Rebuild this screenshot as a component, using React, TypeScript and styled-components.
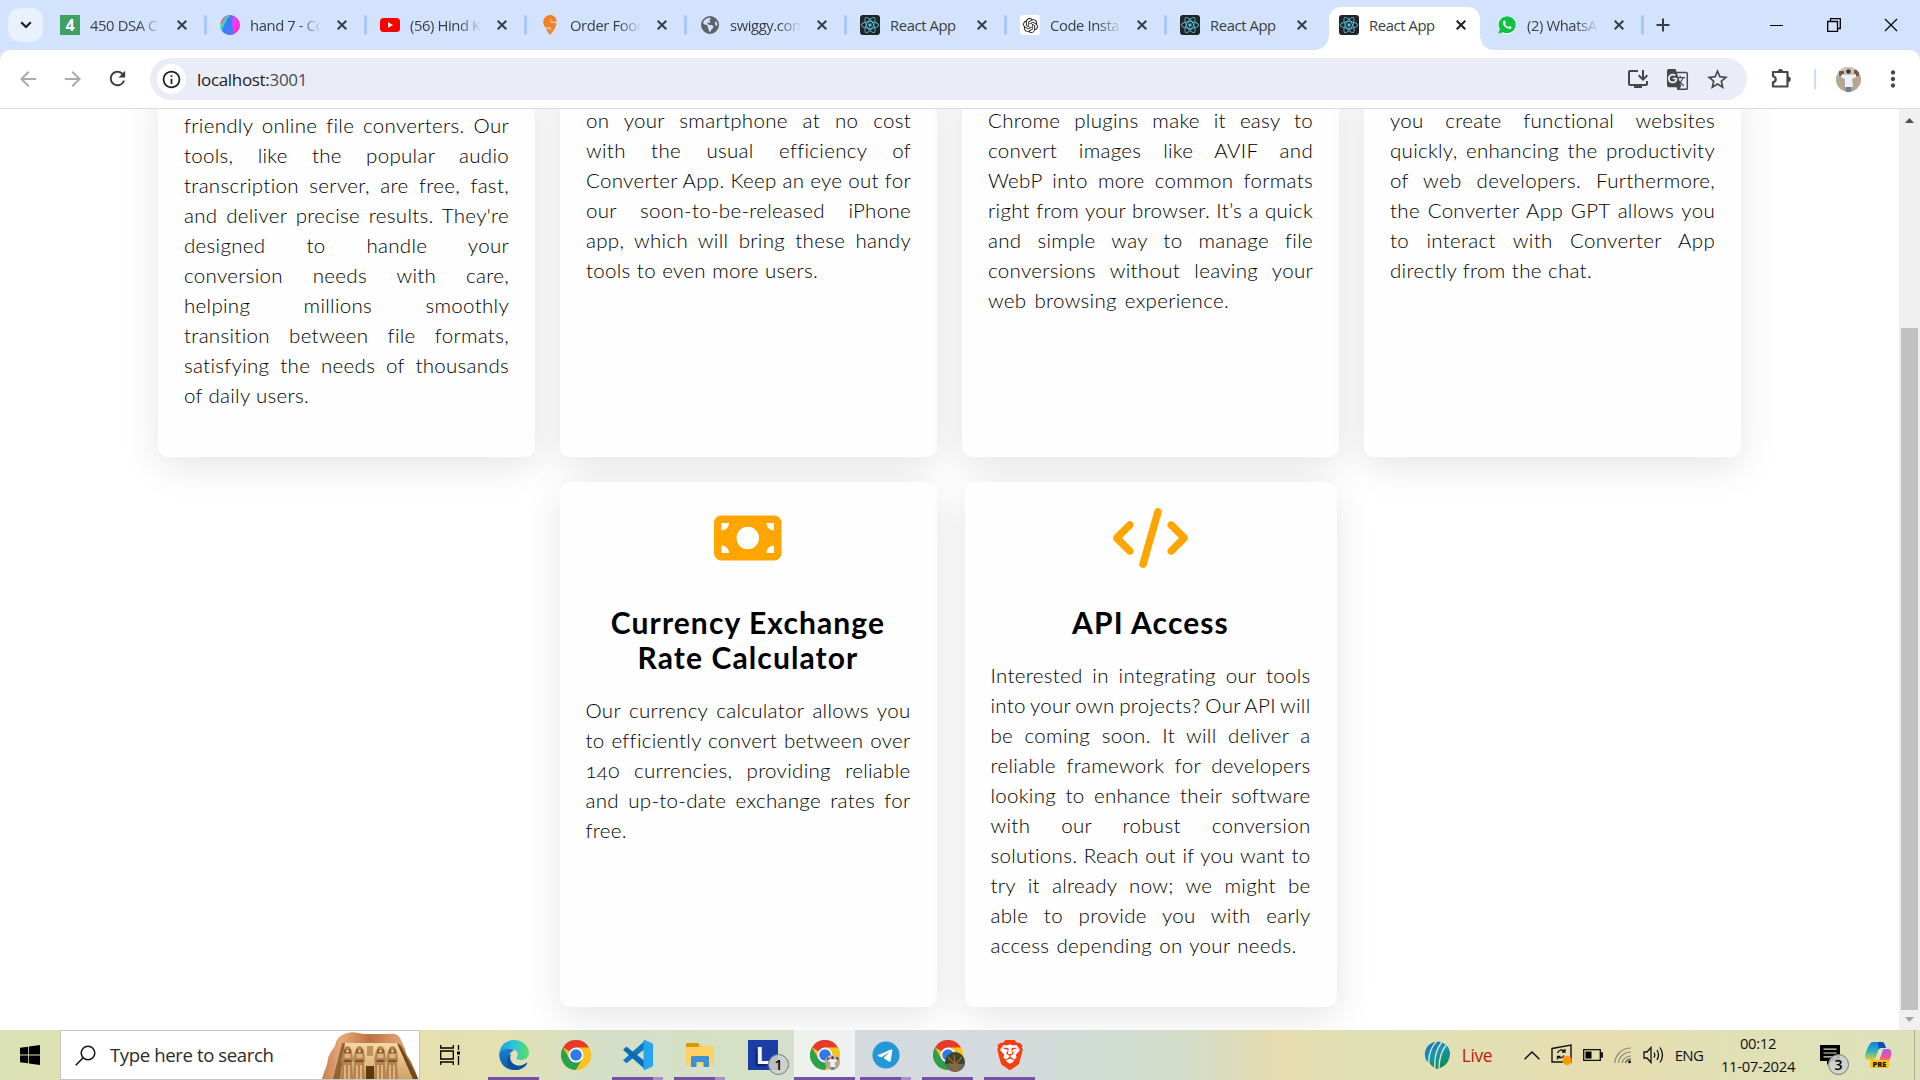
import React from "react";
import styled, { createGlobalStyle, css } from "styled-components";
import { FaCode, FaMoneyBill, FaEarthAmericas, FaTelegram } from "react-icons/fa6";
import { SiOpenai, SiReact, SiSwiggy, SiBrave } from "react-icons/si";
import { IoLogoWhatsapp } from "react-icons/io";
import {
  MdArrowBack,
  MdArrowForward,
  MdRefresh,
  MdInfoOutline,
  MdInstallDesktop,
  MdGTranslate,
  MdStarOutline,
  MdMoreVert,
} from "react-icons/md";

const GlobalStyle = createGlobalStyle`
  * { box-sizing: border-box; }
  body { margin: 0; overflow: hidden; background: #fff; }
  svg { display: block; flex: none; }
`;

const Screen = styled.div`
  width: 1920px;
  height: 1080px;
  display: flex;
  flex-direction: column;
  overflow: hidden;
  font-family: "Open Sans", "Noto Sans", sans-serif;
  color: #1f1f1f;
`;

/* ---------- Tab strip ---------- */

const TabStrip = styled.div`
  height: 50px;
  flex: none;
  display: flex;
  background: #d3e3fd;
  padding-left: 8px;
`;

const TabSearch = styled.div`
  width: 35px;
  height: 34px;
  margin: 8px 7px 0 0;
  border-radius: 12px;
  background: #e9f0fe;
  display: flex;
  align-items: center;
  justify-content: center;
`;

const TabBox = styled.div<{ $active?: boolean; $shift?: number }>`
  position: relative;
  width: ${(p) => (p.$active ? 151 : 160)}px;
  height: ${(p) => (p.$active ? 43 : 50)}px;
  margin: ${(p) => (p.$active ? "7px 10px 0 -1px" : "0")};
  margin-left: ${(p) => p.$shift}px;
  padding-left: 10px;
  padding-bottom: ${(p) => (p.$active ? 7 : 0)}px;
  display: flex;
  align-items: center;
  flex: none;
  ${(p) =>
    p.$active &&
    css`
      background: #fff;
      border-radius: 12px 12px 0 0;
      &::before,
      &::after {
        content: "";
        position: absolute;
        bottom: 0;
        width: 14px;
        height: 14px;
      }
      &::before {
        left: -14px;
        background: radial-gradient(circle at 0 0, transparent 13.5px, #fff 14px);
      }
      &::after {
        right: -14px;
        background: radial-gradient(circle at 100% 0, transparent 13.5px, #fff 14px);
      }
    `}
`;

const Favicon = styled.div<{ $bg?: string; $color?: string; $radius?: number }>`
  width: 20px;
  height: 20px;
  flex: none;
  border-radius: ${(p) => p.$radius ?? 0}px;
  background: ${(p) => p.$bg ?? "transparent"};
  color: ${(p) => p.$color ?? "#000"};
  display: flex;
  align-items: center;
  justify-content: center;
  font: 700 16px "Open Sans", sans-serif;
`;

const TabTitle = styled.div<{ $fade?: boolean }>`
  width: 73px;
  margin-left: 10px;
  font-size: 14.8px;
  letter-spacing: -0.4px;
  line-height: 22px;
  white-space: nowrap;
  overflow: hidden;
  color: #3a3d41;
  ${(p) =>
    p.$fade &&
    css`
      mask-image: linear-gradient(90deg, #000 66%, transparent 98%);
    `}
`;

const TabClose = styled.div`
  width: 16px;
  margin-left: 11px;
  display: flex;
  justify-content: center;
`;

const TabDivider = styled.div`
  width: 3px;
  height: 20px;
  margin-left: 14px;
  border-radius: 2px;
  background: #a8c7fa;
`;

const NewTab = styled.div`
  width: 24px;
  margin-left: 4px;
  display: flex;
  align-items: center;
  justify-content: center;
`;

const WindowButtons = styled.div`
  margin-left: auto;
  padding-right: 22px;
  display: flex;
  gap: 43.5px;
  align-items: center;
`;

/* ---------- Toolbar ---------- */

const ToolbarBack = styled.div`
  height: 59px;
  flex: none;
  background: #d3e3fd;
`;

const Toolbar = styled.div`
  height: 59px;
  border-bottom: 1px solid #dcdcde;
  border-radius: 10px 10px 0 0;
  background: #fff;
  display: flex;
  align-items: center;
  padding: 0 0 0 16px;
  color: #474747;
`;

const NavButtons = styled.div`
  display: flex;
  flex: none;
  gap: 21px;
  width: 134px;
  color: #ababab;
  svg:last-child {
    color: #3c3c3c;
  }
`;

const Omnibox = styled.div`
  width: 1597px;
  flex: none;
  height: 42px;
  border-radius: 21px;
  background: #eaedf8;
  display: flex;
  align-items: center;
  padding-left: 7px;
`;

const SiteInfo = styled.div`
  width: 29px;
  height: 30px;
  border-radius: 50%;
  background: #fff;
  color: #1f1f1f;
  display: flex;
  align-items: center;
  justify-content: center;
`;

const Address = styled.div`
  margin-left: 11px;
  font-size: 17px;
  letter-spacing: -0.32px;
  color: #1f2023;
  span {
    color: #474b52;
  }
`;

const OmniActions = styled.div`
  margin-left: auto;
  padding-right: 17px;
  display: flex;
  gap: 16px;
  align-items: center;
  color: #474747;
`;

const Gap = styled.div<{ $w: number }>`
  width: ${(p) => p.$w}px;
  flex: none;
`;

const ToolbarDivider = styled.div`
  width: 2px;
  height: 20px;
  flex: none;
  margin: 0 20px 0 21px;
  background: #c9dcfc;
`;

const Avatar = styled.div`
  width: 25px;
  height: 25px;
  flex: none;
  border-radius: 50%;
  overflow: hidden;
  margin-right: 19px;
`;

/* ---------- Page ---------- */

const Viewport = styled.div`
  height: 921px;
  flex: none;
  display: flex;
  overflow: hidden;
`;

const Page = styled.main`
  width: 1899px;
  height: 921px;
  overflow: hidden;
  display: flex;
  flex-direction: column;
  align-items: center;
  gap: 25px;
  background: #fff;
`;

const CardRow = styled.section`
  display: flex;
  flex: none;
  gap: 25px;
  &:first-child {
    margin-top: -32px;
  }
  &:last-child {
    gap: 28px;
    margin-right: 3px;
  }
`;

const CardBox = styled.article<{ $w?: number; $h: number; $pad: number }>`
  width: ${(p) => p.$w ?? 377}px;
  height: ${(p) => p.$h}px;
  padding: ${(p) => p.$pad}px 26px 0;
  border-radius: 10px;
  background: #fefefe;
  box-shadow: 0 10px 38px rgba(0, 0, 0, 0.105);
`;

const CardIcon = styled.div<{ $w: number }>`
  height: 60px;
  color: #ffa500;
  display: flex;
  justify-content: center;
  margin-bottom: 37px;
  svg {
    width: ${(p) => p.$w}px;
    height: 60px;
  }
`;

const CardTitle = styled.h2`
  margin: 0 -10px 20px;
  font: 700 30px/35px Lato, sans-serif;
  letter-spacing: 1.1px;
  text-align: center;
  color: #000;
`;

const CardText = styled.div`
  font: 300 20.5px/30px Lato, sans-serif;
  font-variant-numeric: oldstyle-nums;
  letter-spacing: 0.3px;
  word-spacing: -2px;
  color: #000;
`;

const TextLine = styled.div<{ $width?: number }>`
  height: 30px;
  width: ${(p) => (p.$width ? `${p.$width}px` : "auto")};
  white-space: nowrap;
  text-align: justify;
  text-align-last: justify;
`;

const Scrollbar = styled.div`
  width: 21px;
  height: 921px;
  background: #f0f0f0;
  display: flex;
  flex-direction: column;
  align-items: center;
  padding: 9px 0 7px;
`;

const Thumb = styled.div`
  width: 17px;
  height: 682px;
  margin: 205px 0 7px;
  background: #c1c1c1;
`;

/* ---------- Taskbar ---------- */

const Taskbar = styled.footer`
  height: 50px;
  flex: none;
  display: flex;
  background: linear-gradient(
    90deg,
    #dae1b6 0,
    #dde2b4 60px,
    #e6dfae 430px,
    #e3e0b2 500px,
    #d4dfc8 600px,
    #d5e1c5 760px,
    #d5dade 860px,
    #d4dadd 1000px,
    #cfddd3 1110px,
    #d5ddc8 1190px,
    #e6dcaf 1280px,
    #dfe0b4 1370px,
    #e3dfb3 1500px,
    #e6ddb0 1600px,
    #dfe1b8 1800px,
    #dde0b9 1920px
  );
`;

const Start = styled.div`
  width: 60px;
  display: flex;
  align-items: center;
  justify-content: center;
`;

const SearchBox = styled.div`
  width: 360px;
  height: 50px;
  border: 1px solid #c6c6c6;
  background: #fff;
  display: flex;
  align-items: center;
  padding-left: 14px;
`;

const SearchText = styled.div`
  width: 212px;
  margin: -2px 0 0 14px;
  font-size: 18.6px;
  letter-spacing: -0.4px;
  white-space: nowrap;
  color: #2b2b2b;
`;

const TaskView = styled.div`
  width: 63px;
  padding-right: 2px;
  display: flex;
  align-items: center;
  justify-content: center;
`;

const TaskButton = styled.div<{ $open?: boolean; $focused?: boolean; $stack?: boolean; $w?: number }>`
  position: relative;
  width: ${(p) => p.$w ?? 62}px;
  height: 50px;
  display: flex;
  align-items: center;
  justify-content: center;
  background: ${(p) => (p.$focused ? "rgba(255,255,255,.6)" : "transparent")};
  &::after {
    content: "";
    display: ${(p) => (p.$open ? "block" : "none")};
    position: absolute;
    bottom: 0;
    left: ${(p) => (p.$focused ? 0 : 5)}px;
    right: ${(p) => (p.$focused ? 0 : 6)}px;
    height: 3px;
    background: ${(p) =>
      p.$stack ? "linear-gradient(90deg, #7450a8 80%, #a98fcc 80%)" : "#7450a8"};
  }
`;

const CountBadge = styled.div<{ $x: number; $y: number }>`
  position: absolute;
  left: ${(p) => p.$x}px;
  top: ${(p) => p.$y}px;
  width: 21px;
  height: 21px;
  border-radius: 50%;
  border: 1px solid #777;
  background: rgba(205, 208, 205, 0.88);
  display: flex;
  align-items: center;
  justify-content: center;
  font-size: 14px;
  line-height: 1;
  font-weight: 600;
  color: #000;
`;

const LetterTile = styled.div`
  width: 30px;
  height: 30px;
  background: #1c3da8;
  color: #fff;
  display: flex;
  align-items: center;
  justify-content: center;
  font: 700 24px/1 "Open Sans", sans-serif;
  text-shadow: -2px 2px 2px #0b2263;
`;

const Tray = styled.div`
  margin-left: auto;
  display: flex;
  align-items: center;
`;

const TrayItem = styled.div<{ $w: number }>`
  position: relative;
  width: ${(p) => p.$w}px;
  height: 50px;
  display: flex;
  align-items: center;
  justify-content: center;
`;

const TrayText = styled.div<{ $w: number; $size: number; $color?: string; $spacing?: number }>`
  width: ${(p) => p.$w}px;
  font-size: ${(p) => p.$size}px;
  letter-spacing: ${(p) => p.$spacing ?? -0.4}px;
  color: ${(p) => p.$color ?? "#111"};
  white-space: nowrap;
  text-align: center;
`;

const Clock = styled.div`
  width: 98px;
  text-align: center;
  font-size: 14.8px;
  line-height: 23px;
  letter-spacing: -0.3px;
  white-space: nowrap;
  color: #111;
`;

const ShowDesktop = styled.div`
  width: 6px;
  height: 50px;
  border-left: 1px solid #a8ab8e;
`;

/* ---------- Drawings ---------- */

const Cross = ({ size = 10, w = 2, color = "#3a3d41" }) => (
  <svg width={size} height={size} viewBox="0 0 10 10">
    <path d="M.7.7 9.3 9.3M9.3.7.7 9.3" stroke={color} strokeWidth={w} fill="none" />
  </svg>
);

const ReactIcon = () => (
  <Favicon $bg="#222427" $color="#58c4dc" $radius={3}>
    <SiReact size={18} />
  </Favicon>
);

const Youtube = () => (
  <svg width="20" height="20" viewBox="0 0 20 20">
    <rect y="3" width="20" height="14" rx="3.5" fill="#f00" />
    <path d="M8 7.2v5.6l5-2.8z" fill="#fff" />
  </svg>
);

const Gradient = () => (
  <svg width="20" height="20" viewBox="0 0 20 20">
    <defs>
      <linearGradient id="cv" x1="0" x2="1" y2=".35">
        <stop offset="0" stopColor="#ff8a3c" />
        <stop offset=".12" stopColor="#f4e04a" />
        <stop offset=".24" stopColor="#29d6c0" />
        <stop offset=".4" stopColor="#3c7bff" />
        <stop offset=".58" stopColor="#7a63ff" />
        <stop offset=".74" stopColor="#ff3bf0" />
        <stop offset="1" stopColor="#ff2bd8" />
      </linearGradient>
      <clipPath id="cvc">
        <circle cx="10" cy="10" r="10" />
      </clipPath>
    </defs>
    <g clipPath="url(#cvc)">
      <rect width="20" height="20" fill="url(#cv)" />
      <path d="M0 18C6 15 5 5 9.500 3.500 14 3 11 14 15 20H0z" fill="#3f7dfb" />
      <path d="M0 14C4 11 4 3 9 1" fill="none" stroke="#35e0b8" strokeWidth="2" />
      <path d="M0 9C2 6 4 3 6 0" fill="none" stroke="#ff4fb0" strokeWidth="2" />
    </g>
  </svg>
);

const Puzzle = () => (
  <svg width="24" height="24" viewBox="0 0 24 24">
    <path
      d="M4 5h14.500v14.500H4v-4.300c3.600-.8 3.600-5.200 0-6z"
      fill="none"
      stroke="#474747"
      strokeWidth="2.200"
      strokeLinejoin="round"
    />
    <path d="M8.700 5a2.700 2.900 0 0 1 5.400 0zM19 9.500a2.800 2.800 0 0 1 0 5.600z" fill="#474747" />
  </svg>
);

const AvatarArt = ({ size = 25 }: { size?: number }) => (
  <svg width={size} height={size} viewBox="0 0 25 25">
    <rect width="25" height="25" fill="#b5a893" />
    <path d="M0 0h25v9H0z" fill="#c9c3bb" />
    <path d="M3 4h5v5H3zM18 3h5v6h-5z" fill="#7c5549" />
    <circle cx="12.500" cy="4.500" r="2.300" fill="#4b352b" />
    <path d="M6 7l4 1h5l5-1v3l-4 2 1 8H9V12L5 10z" fill="#eef1f5" />
    <path d="M9.500 20h6l-.5 5h-5z" fill="#6b7f96" />
  </svg>
);

const Chrome = ({ size = 30 }: { size?: number }) => (
  <svg width={size} height={size} viewBox="0 0 48 48">
    <circle cx="24" cy="24" r="24" fill="#fcc31e" />
    <path d="M24 24 3.200 12a24 24 0 0 1 41.600 0z" fill="#e33b2e" />
    <path d="M3.200 12A24 24 0 0 0 24 48l10.400-18L24 24 13.600 30z" fill="#2da04e" />
    <path d="M24 12h20.800A24 24 0 0 1 24 48l10.400-18z" fill="#fcc31e" />
    <circle cx="24" cy="24" r="12" fill="#fff" />
    <circle cx="24" cy="24" r="9.300" fill="#3278ea" />
  </svg>
);

const ProfileDot = styled.div<{ $x: number; $y: number; $size: number }>`
  position: absolute;
  left: ${(p) => p.$x}px;
  top: ${(p) => p.$y}px;
  width: ${(p) => p.$size}px;
  height: ${(p) => p.$size}px;
  border-radius: 50%;
  overflow: hidden;
`;

const TreeArt = () => (
  <svg width="20" height="20" viewBox="0 0 20 20">
    <rect width="20" height="20" fill="#39452f" />
    <path d="M0 12h20v8H0z" fill="#6e6a58" />
    <path d="M9 20V11L3 5M10 12l-1-9M11 12l6-7M9 14l-5-3M12 20v-9" stroke="#a4682c" strokeWidth="1.300" fill="none" />
  </svg>
);

const Edge = () => (
  <svg width="30" height="30" viewBox="0 0 30 30">
    <defs>
      <linearGradient id="e1" x1="0" y1=".4" x2="1" y2=".4">
        <stop offset="0" stopColor="#1f9fe3" />
        <stop offset=".5" stopColor="#2cc3d6" />
        <stop offset="1" stopColor="#5fe05a" />
      </linearGradient>
      <linearGradient id="e2" x1="0" y1="0" x2=".3" y2="1">
        <stop offset="0" stopColor="#1684d6" />
        <stop offset="1" stopColor="#0c59a4" />
      </linearGradient>
    </defs>
    <path d="M.3 13C1.500 5 7.500 0 15 0c8.500 0 15 6 15 12.500 0 5-3.800 7.500-7.800 7.500-3.500 0-5-1.300-4.700-2.200.3-.8 1.300-1.500 1.300-3.500 0-3-3.300-5.800-8-5.800C6 8.500 2 10.500.3 13z" fill="url(#e1)" />
    <path d="M.3 13c2-3.300 6-4.700 9.700-4.500 2.500.1 4.500 1 5.500 2-3.500.4-5.500 4-5.500 7.500 0 5.500 4.500 9 9.500 9 2.500 0 4.500-.5 6-1.200C22.800 28.500 19.300 30 15 30 6.500 30-.5 23 .3 13z" fill="url(#e2)" />
    <path d="M12.500 14c-1.200 1.500-1.500 3-1.200 4.800.8 4.400 5 7.200 9.700 6.800 2.500-.2 5-1.600 6.200-2.600.7-.6 1.300.2.800.9C25.500 27.500 21.500 30 17 29.900 10.500 29 8 23.500 8.500 19.500 9 16.500 10.500 14.500 12.500 14z" fill="#0d4f97" />
  </svg>
);

const VsCode = () => (
  <svg width="30" height="30" viewBox="0 0 30 30">
    <path d="M21.500 1 0 20.300l2.500 2.300c.5.500 1.200.5 1.700.1L22 8.800z" fill="#0a7bc4" />
    <path d="M21.500 29 0 9.700l2.500-2.300c.5-.5 1.200-.5 1.700-.1L22 21.200z" fill="#0a6cb4" />
    <path d="M21.800 0 28.700 3c.8.400 1.300 1 1.300 1.900v20.200c0 .9-.5 1.500-1.300 1.900l-6.900 3c-1 .4-1.300-.3-1.300-1V1c0-.7.300-1.400 1.300-1z" fill="#27a5ee" />
  </svg>
);

const Folder = () => (
  <svg width="28" height="24" viewBox="0 0 28 24">
    <path d="M0 1.500C0 .7.500 0 1.300 0H12l2 2.300L12 5H0z" fill="#dc9708" />
    <path d="M0 4h12l2-1.500h13c.7 0 1 .5 1 1V21c0 .7-.3 1-1 1H1c-.7 0-1-.3-1-1z" fill="#fdd164" />
    <path d="M5 24V14.500c0-1 .7-1.500 1.500-1.500h15c.8 0 1.500.5 1.500 1.500V24h-5.500v-5h-7v5z" fill="#3c91d4" />
  </svg>
);

const BraveBack = styled.div`
  width: 30px;
  height: 30px;
  color: #fb3d10;
  background: radial-gradient(circle at 50% 46%, #fff 9px, transparent 9.500px);
`;

const TelegramBack = styled.div`
  width: 28px;
  height: 28px;
  border-radius: 50%;
  color: #2299d6;
  background: radial-gradient(circle, #fff 11px, transparent 12px);
`;

const WhatsappBack = styled.div`
  width: 20px;
  height: 20px;
  color: #0dc143;
  background: radial-gradient(circle, #fff 9px, transparent 9.500px);
`;

const Statue = ({ x }: { x: number }) => (
  <g transform={`translate(${x} 0)`}>
    <path d="M3 19l2-4 2.500-1 2.500 1 2 4 1 9-1 3 1 16H1l1-15-1-4z" fill="#b5834f" />
    <path d="M5 17h5l1 4H4zM4 28h7l1 2H3z" fill="#7d5029" />
    <path d="M4 33h2v14H4zM8 33h2v14H8zM4.500 22h6v4h-6z" fill="#dcb27e" />
    <circle cx="7.500" cy="19" r="1.700" fill="#e2b781" />
  </g>
);

const Temple = () => (
  <svg width="97" height="47" viewBox="0 0 97 47">
    <defs>
      <linearGradient id="t1" x2="1">
        <stop offset="0" stopColor="#c77f50" />
        <stop offset=".2" stopColor="#e6aa78" />
        <stop offset=".5" stopColor="#bb7340" />
        <stop offset=".8" stopColor="#e0a070" />
        <stop offset="1" stopColor="#8e572c" />
      </linearGradient>
      <linearGradient id="t2" y2="1" x2="0">
        <stop offset="0" stopColor="#f6d7a3" />
        <stop offset="1" stopColor="#cfa26a" />
      </linearGradient>
    </defs>
    <path d="M0 47c2-8 5-12 6-20 1-7 7-10 8-17 2-5 6-8 12-9 5-2 10 0 16 1h26c4-1 8 0 10 4l5 11c1 7 5 9 7 15 2 5 4 8 6 15z" fill="url(#t1)" />
    <path d="M11 47 20 11h55l16 36z" fill="url(#t2)" />
    <path d="m75 11 16 36h5L79 14z" fill="#714619" />
    <path d="m11 47 9-36h3l-5 36z" fill="#8f6537" />
    <path d="M45 14h6v10h-6z" fill="#bd945c" />
    <path d="M44 34h8v13h-8z" fill="#5d3a0d" />
    <Statue x={18} />
    <Statue x={30} />
    <Statue x={51} />
    <Statue x={63} />
  </svg>
);

const Cricket = () => (
  <svg width="26" height="29" viewBox="0 0 26 29">
    <defs>
      <linearGradient id="ic" x2="0.600" y2="1">
        <stop offset="0" stopColor="#0c6ab4" />
        <stop offset=".5" stopColor="#1696bd" />
        <stop offset="1" stopColor="#0e8a5a" />
      </linearGradient>
    </defs>
    <path d="M10 1C16-1 25 3 26 12c0 7-4 13-10 15l-4 1-4-3-6-6C-1 12 2 4 10 1z" fill="url(#ic)" />
    <path d="M13 0C7 6 4 13 5 24M18 1C12 8 10 17 11 28M22 4c-5 7-7 14-7 23" fill="none" stroke="#e6e3bb" strokeWidth="1.400" />
  </svg>
);

const TrayUpdate = () => (
  <svg width="22" height="22" viewBox="0 0 22 22">
    <path d="M1 4.500 20 1v17L1 18z" fill="none" stroke="#111" strokeWidth="1.400" />
    <path d="M6.500 9a4 4 0 0 1 7-1.500M14 5v3h-3M13 11.500a4 4 0 0 1-6 1.500M6.500 15.500v-3h3" fill="none" stroke="#111" strokeWidth="1.300" />
    <circle cx="16" cy="16.500" r="4.700" fill="#ff980c" />
  </svg>
);

const Wifi = () => (
  <svg width="18" height="18" viewBox="0 0 18 18" fill="none" strokeWidth="1.200">
    <path d="M.8 17A16 16 0 0 1 17 2M4.500 17A12 12 0 0 1 17 6M8 17a9 9 0 0 1 9-7" stroke="#8a8a72" />
    <path d="M11.500 17a5.500 5.500 0 0 1 5.500-4" stroke="#555" />
    <circle cx="15.500" cy="15.800" r="1.500" fill="#111" />
  </svg>
);

const Volume = () => (
  <svg width="22" height="18" viewBox="0 0 22 18" fill="none" stroke="#111" strokeWidth="1.300">
    <path d="M1 6h3l4-4.500v15L4 12H1z" />
    <path d="M11 6.500q1.500 2.500 0 5M14 4q3 5 0 10M17 1.500q5 7.500 0 15" />
  </svg>
);

const Copilot = () => (
  <svg width="27" height="26" viewBox="0 0 27 26">
    <defs>
      <linearGradient id="c1" x2="0" y2="1">
        <stop offset="0" stopColor="#147fe0" />
        <stop offset=".5" stopColor="#2bb2c0" />
        <stop offset="1" stopColor="#e3d12a" />
      </linearGradient>
      <linearGradient id="c2" x2="0" y2="1">
        <stop offset="0" stopColor="#a65bf0" />
        <stop offset=".6" stopColor="#f2578a" />
        <stop offset="1" stopColor="#ff9a50" />
      </linearGradient>
    </defs>
    <path d="M8 0h9c2 0 3 3 4 6h-5c-2 0-3 2-4 6s-2 6-5 6H4c-3 0-5-3-3-8S5 0 8 0z" fill="url(#c1)" />
    <path d="M13 0h4c2 0 3 3 4 6h-5c-1 0-2 0-2.500 1z" fill="#194bb8" />
    <path d="M19 7h4c3 0 4 3 3 7s-3 7-6 7h-7l4-10c.5-2 1-4 2-4z" fill="url(#c2)" />
  </svg>
);

const PreTag = styled.div`
  position: absolute;
  left: 14px;
  top: 30px;
  width: 19px;
  height: 8px;
  border-radius: 2px;
  background: #ffc412;
  font: 800 7.5px/8px "Open Sans", sans-serif;
  text-align: center;
  color: #111;
`;

/* ---------- Data ---------- */

type TabInfo = {
  title: string;
  icon: React.ReactNode;
  fade?: boolean;
  active?: boolean;
  divider?: boolean;
  shift?: number;
};

const tabs: TabInfo[] = [
  { title: "450 DSA C", icon: <Favicon $bg="#40a060" $color="#fff">4</Favicon>, fade: true },
  { title: "hand 7 - Co", icon: <Gradient />, fade: true },
  { title: "(56) Hind K", icon: <Youtube />, fade: true },
  { title: "Order Food", icon: <Favicon $color="#f58220"><SiSwiggy size={20} /></Favicon>, fade: true },
  { title: "swiggy.com", icon: <Favicon $color="#5f6368"><FaEarthAmericas size={18} /></Favicon>, fade: true },
  { title: "React App", icon: <ReactIcon /> },
  { title: "Code Insta", icon: <Favicon $bg="#fff" $color="#222" $radius={3}><SiOpenai size={15} /></Favicon>, fade: true },
  { title: "React App", icon: <ReactIcon />, divider: false },
  { title: "React App", icon: <ReactIcon />, active: true, divider: false, shift: -1 },
  { title: "(2) WhatsA", icon: <WhatsappBack><IoLogoWhatsapp size={20} /></WhatsappBack>, fade: true, shift: -3 },
];

type Copy = { lines: string[]; lastWidth: number };

const upper: Copy[] = [
  {
    lines: [
      "friendly online file converters. Our",
      "tools, like the popular audio",
      "transcription server, are free, fast,",
      "and deliver precise results. They're",
      "designed to handle your",
      "conversion needs with care,",
      "helping millions smoothly",
      "transition between file formats,",
      "satisfying the needs of thousands",
      "of daily users.",
    ],
    lastWidth: 125,
  },
  {
    lines: [
      "on your smartphone at no cost",
      "with the usual efficiency of",
      "Converter App. Keep an eye out for",
      "our soon-to-be-released iPhone",
      "app, which will bring these handy",
      "tools to even more users.",
    ],
    lastWidth: 232,
  },
  {
    lines: [
      "Chrome plugins make it easy to",
      "convert images like AVIF and",
      "WebP into more common formats",
      "right from your browser. It’s a quick",
      "and simple way to manage file",
      "conversions without leaving your",
      "web browsing experience.",
    ],
    lastWidth: 241,
  },
  {
    lines: [
      "you create functional websites",
      "quickly, enhancing the productivity",
      "of web developers. Furthermore,",
      "the Converter App GPT allows you",
      "to interact with Converter App",
      "directly from the chat.",
    ],
    lastWidth: 202,
  },
];

const currency: Copy = {
  lines: [
    "Our currency calculator allows you",
    "to efficiently convert between over",
    "140 currencies, providing reliable",
    "and up-to-date exchange rates for",
    "free.",
  ],
  lastWidth: 41,
};

const api: Copy = {
  lines: [
    "Interested in integrating our tools",
    "into your own projects? Our API will",
    "be coming soon. It will deliver a",
    "reliable framework for developers",
    "looking to enhance their software",
    "with our robust conversion",
    "solutions. Reach out if you want to",
    "try it already now; we might be",
    "able to provide you with early",
    "access depending on your needs.",
  ],
  lastWidth: 306,
};

const Paragraph = ({ copy }: { copy: Copy }) => (
  <CardText>
    {copy.lines.map((line, i) => (
      <TextLine key={line} $width={i === copy.lines.length - 1 ? copy.lastWidth : undefined}>
        {line}
      </TextLine>
    ))}
  </CardText>
);

export default function App() {
  return (
    <Screen>
      <GlobalStyle />
      <TabStrip>
        <TabSearch>
          <svg width="12" height="8" viewBox="0 0 12 8">
            <path d="M1.200 1.200 6 6l4.800-4.800" fill="none" stroke="#1f1f1f" strokeWidth="2.200" />
          </svg>
        </TabSearch>
        {tabs.map((t, i) => (
          <TabBox key={i} $active={t.active} $shift={t.shift}>
            {t.icon}
            <TabTitle $fade={t.fade}>{t.title}</TabTitle>
            <TabClose>
              <Cross color={t.active ? "#1f1f1f" : undefined} />
            </TabClose>
            {t.divider !== false && <TabDivider />}
          </TabBox>
        ))}
        <NewTab>
          <svg width="14" height="14" viewBox="0 0 14 14">
            <path d="M7 .5v13M.5 7h13" stroke="#3a3d41" strokeWidth="2" />
          </svg>
        </NewTab>
        <WindowButtons>
          <svg width="13" height="14" viewBox="0 0 13 14">
            <path d="M0 7.500h13" stroke="#000" strokeWidth="1" />
          </svg>
          <svg width="14" height="14" viewBox="0 0 14 14">
            <path d="M.7 3.500h9.800v9.800H.7zM3.500 3.500V.7h9.800v9.800h-2.800" fill="none" stroke="#000" strokeWidth="1.300" />
          </svg>
          <Cross size={14} w={0.9} color="#000" />
        </WindowButtons>
      </TabStrip>

      <ToolbarBack>
        <Toolbar>
          <NavButtons>
            <MdArrowBack size={24} />
            <MdArrowForward size={24} />
            <MdRefresh size={23} />
          </NavButtons>
          <Omnibox>
            <SiteInfo>
              <MdInfoOutline size={21} />
            </SiteInfo>
            <Address>
              localhost:<span>3001</span>
            </Address>
            <OmniActions>
              <MdInstallDesktop size={24} />
              <MdGTranslate size={23} />
              <MdStarOutline size={25} />
            </OmniActions>
          </Omnibox>
          <Gap $w={22} />
          <Puzzle />
          <ToolbarDivider />
          <Avatar>
            <AvatarArt />
          </Avatar>
          <MdMoreVert size={26} />
        </Toolbar>
      </ToolbarBack>

      <Viewport>
        <Page>
          <CardRow>
            {upper.map((c, i) => (
              <CardBox key={i} $h={380} $pad={i === 0 ? 33 : 28}>
                <Paragraph copy={c} />
              </CardBox>
            ))}
          </CardRow>
          <CardRow>
            <CardBox $h={525} $pad={26}>
              <CardIcon $w={67.5}>
                <FaMoneyBill />
              </CardIcon>
              <CardTitle>
                Currency Exchange
                <br />
                Rate Calculator
              </CardTitle>
              <Paragraph copy={currency} />
            </CardBox>
            <CardBox $h={525} $w={372} $pad={26}>
              <CardIcon $w={75}>
                <FaCode />
              </CardIcon>
              <CardTitle>API Access</CardTitle>
              <Paragraph copy={api} />
            </CardBox>
          </CardRow>
        </Page>
        <Scrollbar>
          <svg width="9" height="5" viewBox="0 0 9 5">
            <path d="M0 5 4.500 0 9 5z" fill="#505050" />
          </svg>
          <Thumb />
          <svg width="9" height="5" viewBox="0 0 9 5">
            <path d="M0 0 4.500 5 9 0z" fill="#a3a3a3" />
          </svg>
        </Scrollbar>
      </Viewport>

      <Taskbar>
        <Start>
          <svg width="20" height="20" viewBox="0 0 20 20">
            <path d="M0 2.800 8.200 1.700v7.800H0zM9 1.500 20 0v9.500H9zM0 10.400h8.200v7.900L0 17.200zM9 10.400h11V20L9 18.500z" />
          </svg>
        </Start>
        <SearchBox>
          <svg width="21" height="21" viewBox="0 0 21 21">
            <circle cx="13" cy="8" r="6.800" fill="none" stroke="#111" strokeWidth="1.500" />
            <path d="M8.200 12.800.7 20.300" stroke="#111" strokeWidth="1.500" />
          </svg>
          <SearchText>Type here to search</SearchText>
          <Temple />
        </SearchBox>
        <TaskView>
          <svg width="21" height="20" viewBox="0 0 21 20" fill="none" stroke="#000" strokeWidth="1.300">
            <path d="M.7 0v3h12.600V0M.7 6h12.600v8H.7zM.7 20v-3h12.600v3M18.500 0v5M18.500 11v9" />
            <path d="M17 6.500h3v3h-3z" fill="#000" stroke="none" />
          </svg>
        </TaskView>
        <TaskButton $open>
          <Edge />
        </TaskButton>
        <TaskButton>
          <Chrome />
        </TaskButton>
        <TaskButton $open $stack>
          <VsCode />
        </TaskButton>
        <TaskButton $open $stack>
          <Folder />
        </TaskButton>
        <TaskButton $w={63}>
          <LetterTile>L</LetterTile>
          <CountBadge $x={37} $y={24}>1</CountBadge>
        </TaskButton>
        <TaskButton $open $focused $w={61}>
          <Chrome />
          <ProfileDot $x={31} $y={25} $size={15}>
            <AvatarArt size={15} />
          </ProfileDot>
        </TaskButton>
        <TaskButton $open $stack>
          <TelegramBack>
            <FaTelegram size={28} />
          </TelegramBack>
        </TaskButton>
        <TaskButton $open>
          <Chrome />
          <ProfileDot $x={28} $y={22} $size={20}>
            <TreeArt />
          </ProfileDot>
        </TaskButton>
        <TaskButton $open>
          <BraveBack>
            <SiBrave size={30} />
          </BraveBack>
        </TaskButton>
        <Tray>
          <TrayItem $w={26}>
            <Cricket />
          </TrayItem>
          <TrayText $w={54} $size={17.5} $color="#c01808">
            Live
          </TrayText>
          <Gap $w={13} />
          <TrayItem $w={30}>
            <svg width="16" height="9" viewBox="0 0 16 9">
              <path d="M.6 8.300 8 1l7.400 7.300" fill="none" stroke="#111" strokeWidth="1.500" />
            </svg>
          </TrayItem>
          <TrayItem $w={30}>
            <TrayUpdate />
          </TrayItem>
          <TrayItem $w={31}>
            <svg width="20" height="12" viewBox="0 0 20 12">
              <path d="M.7.700h16.600v10.600H.7zM18 4h1.300v4H18z" fill="none" stroke="#111" strokeWidth="1.300" />
              <path d="M2.500 2.500h6v7h-6z" fill="#000" />
            </svg>
          </TrayItem>
          <TrayItem $w={30}>
            <Wifi />
          </TrayItem>
          <TrayItem $w={31}>
            <Volume />
          </TrayItem>
          <TrayText $w={40} $size={15} $spacing={-0.6}>
            ENG
          </TrayText>
          <Clock>
            00:12
            <br />
            11-07-2024
          </Clock>
          <TrayItem $w={45}>
            <svg width="20" height="20" viewBox="0 0 20 20">
              <path d="M0 0h20v16h-9l-4 4v-4H0z" />
              <path d="M3.500 4.200h13M3.500 8h13M3.500 11.800h13" stroke="#e2e1b8" strokeWidth="1.200" />
            </svg>
            <CountBadge $x={21} $y={24}>3</CountBadge>
          </TrayItem>
          <Gap $w={4} />
          <TrayItem $w={44}>
            <Copilot />
            <PreTag>PRE</PreTag>
          </TrayItem>
          <Gap $w={14} />
          <ShowDesktop />
        </Tray>
      </Taskbar>
    </Screen>
  );
}
